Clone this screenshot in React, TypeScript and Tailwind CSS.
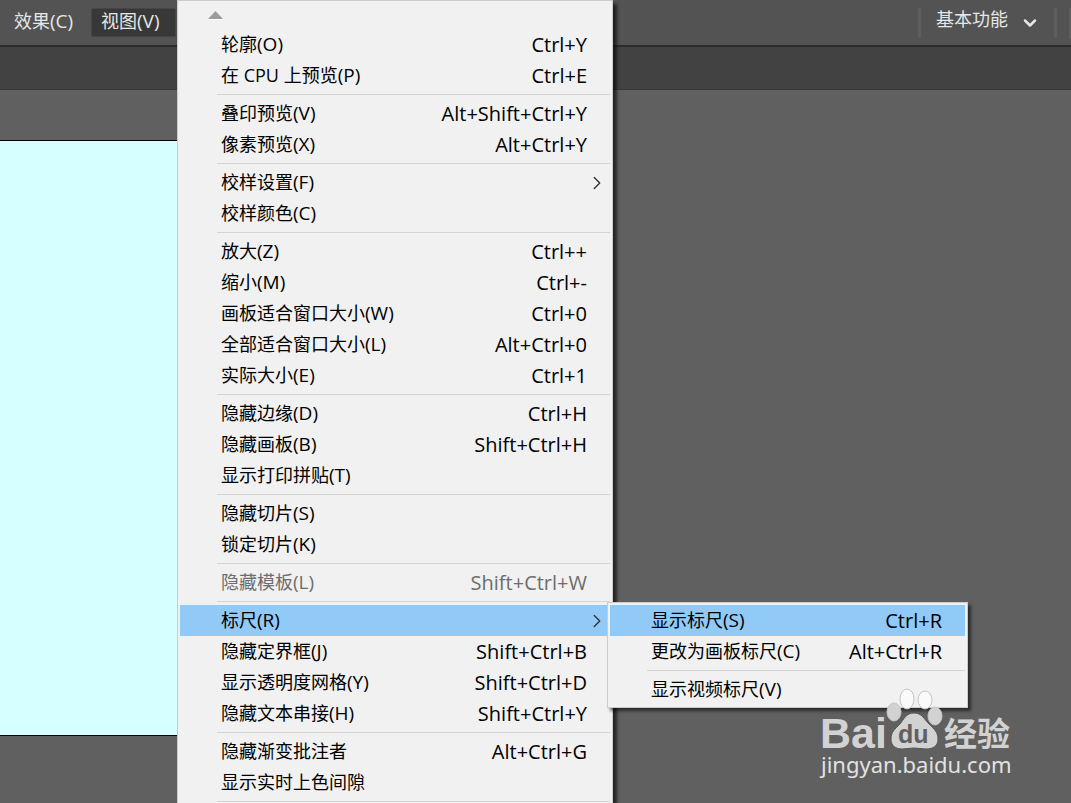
import { ChevronDown, ChevronRight } from "lucide-react";
import clsx from "clsx";

interface MenuEntry {
  label: string;
  hotkey?: string;
  shortcut?: string;
  disabled?: boolean;
  active?: boolean;
  submenu?: MenuEntry[][];
}

const RULER_MENU: MenuEntry[][] = [
  [
    { label: "显示标尺", hotkey: "(S)", shortcut: "Ctrl+R", active: true },
    { label: "更改为画板标尺", hotkey: "(C)", shortcut: "Alt+Ctrl+R" },
  ],
  [{ label: "显示视频标尺", hotkey: "(V)" }],
];

const VIEW_MENU: MenuEntry[][] = [
  [
    { label: "轮廓", hotkey: "(O)", shortcut: "Ctrl+Y" },
    { label: "在 CPU 上预览", hotkey: "(P)", shortcut: "Ctrl+E" },
  ],
  [
    { label: "叠印预览", hotkey: "(V)", shortcut: "Alt+Shift+Ctrl+Y" },
    { label: "像素预览", hotkey: "(X)", shortcut: "Alt+Ctrl+Y" },
  ],
  [
    { label: "校样设置", hotkey: "(F)", submenu: [] },
    { label: "校样颜色", hotkey: "(C)" },
  ],
  [
    { label: "放大", hotkey: "(Z)", shortcut: "Ctrl++" },
    { label: "缩小", hotkey: "(M)", shortcut: "Ctrl+-" },
    { label: "画板适合窗口大小", hotkey: "(W)", shortcut: "Ctrl+0" },
    { label: "全部适合窗口大小", hotkey: "(L)", shortcut: "Alt+Ctrl+0" },
    { label: "实际大小", hotkey: "(E)", shortcut: "Ctrl+1" },
  ],
  [
    { label: "隐藏边缘", hotkey: "(D)", shortcut: "Ctrl+H" },
    { label: "隐藏画板", hotkey: "(B)", shortcut: "Shift+Ctrl+H" },
    { label: "显示打印拼贴", hotkey: "(T)" },
  ],
  [
    { label: "隐藏切片", hotkey: "(S)" },
    { label: "锁定切片", hotkey: "(K)" },
  ],
  [{ label: "隐藏模板", hotkey: "(L)", shortcut: "Shift+Ctrl+W", disabled: true }],
  [
    { label: "标尺", hotkey: "(R)", active: true, submenu: RULER_MENU },
    { label: "隐藏定界框", hotkey: "(J)", shortcut: "Shift+Ctrl+B" },
    { label: "显示透明度网格", hotkey: "(Y)", shortcut: "Shift+Ctrl+D" },
    { label: "隐藏文本串接", hotkey: "(H)", shortcut: "Shift+Ctrl+Y" },
  ],
  [
    { label: "隐藏渐变批注者", shortcut: "Alt+Ctrl+G" },
    { label: "显示实时上色间隙" },
  ],
  [],
];

function MenuItem({ item }: { item: MenuEntry }) {
  return (
    <li role="none" className="relative">
      <button
        role="menuitem"
        disabled={item.disabled}
        aria-haspopup={item.submenu ? "menu" : undefined}
        className={clsx(
          "flex h-[31px] w-full items-center justify-between pl-[41px] whitespace-nowrap",
          item.submenu ? "pr-[2px]" : "pr-[23px]",
          item.active ? "bg-[#91c9f7]" : "enabled:hover:bg-[#91c9f7]",
          item.disabled ? "text-[#6d6d6d]" : "text-black",
        )}
      >
        <span className="text-[18px]">
          {item.label}
          {item.hotkey && <span className="text-[19px]">{item.hotkey}</span>}
        </span>
        {item.shortcut && <span className="text-[20px]">{item.shortcut}</span>}
        {item.submenu && <ChevronRight size={22} strokeWidth={1.5} className="text-[#333]" aria-hidden="true" />}
      </button>
      {item.submenu && item.submenu.length > 0 && (
        <div className="absolute -top-[3px] left-full z-10 -ml-[3px] w-[361px] border border-[#ccc] bg-[#f1f1f1] p-[2px] shadow-[3px_3px_3px_rgba(0,0,0,0.55)]">
          <MenuGroups groups={item.submenu} label="标尺" />
        </div>
      )}
    </li>
  );
}

function MenuGroups({ groups, label }: { groups: MenuEntry[][]; label: string }) {
  return (
    <div role="menu" aria-label={label}>
      {groups.map((group, i) => (
        <div key={i}>
          {i > 0 && <hr className="my-[3px] ml-[37px] border-t border-[#d4d4d4]" />}
          <ul role="none">
            {group.map((item) => (
              <MenuItem key={item.label} item={item} />
            ))}
          </ul>
        </div>
      ))}
    </div>
  );
}

function Watermark() {
  return (
    <svg
      className="pointer-events-none absolute right-[55px] bottom-[19px] z-20"
      width="200"
      height="100"
      viewBox="0 0 200 100"
      fill="#d2d2d2"
      aria-label="Baidu"
    >
      <text x="4" y="64" fontFamily="Liberation Sans" fontWeight="700" fontSize="43">Bai</text>
      <g stroke="#c4c4c4" strokeWidth="1">
        <ellipse cx="78" cy="28" rx="7" ry="9" />
        <ellipse cx="91" cy="15" rx="7" ry="10" fill="#fafafa" />
        <ellipse cx="109" cy="16" rx="7" ry="9" fill="#fafafa" />
        <ellipse cx="119" cy="32" rx="7" ry="9" />
      </g>
      <path
        d="M98 29c-8 0-10 6-14 11-5 5-9 8-9 15 0 7 5 10 11 10 4 0 8-1 12-1s8 1 12 1c7 0 12-3 12-10s-4-10-9-15c-5-5-7-11-15-11z"
        stroke="#565656"
        strokeWidth="1"
      />
      <text x="82" y="59" fill="#606060" fontFamily="Liberation Sans" fontWeight="700" fontSize="25">du</text>
      <text x="128" y="62" fontFamily="Noto Sans CJK SC" fontWeight="700" fontSize="33">经验</text>
      <text x="5" y="89" fill="#e2e2e2" fontFamily="Noto Sans" fontWeight="400" fontSize="22">jingyan.baidu.com</text>
    </svg>
  );
}

export default function App() {
  return (
    <div className="relative flex h-screen flex-col overflow-hidden bg-[#606060] font-['Open_Sans','Noto_Sans_CJK_SC',sans-serif] font-[370]">
      {/* Menu bar */}
      <header className="flex h-[47px] shrink-0 items-start justify-between border-b-2 border-[#2c2c2c] bg-[#535353] text-[18px] text-[#e6e6e6]">
        <nav className="flex gap-[5px] pt-2 pl-1">
          <button className="flex h-[29px] w-[82px] items-start rounded-[2px] border border-transparent pl-[9px] leading-6 whitespace-nowrap">
            效果<span className="text-[19px]">(C)</span>
          </button>
          <button
            aria-expanded="true"
            className="flex h-[29px] w-[85px] items-start rounded-[2px] border border-[#464646] bg-[#383838] pl-[9px] leading-6 whitespace-nowrap"
          >
            视图<span className="text-[19px]">(V)</span>
          </button>
        </nav>
        <div className="mt-2 flex h-[30px] items-stretch">
          <div className="w-[3px] bg-[#5e5e5e]" />
          <button className="flex items-start gap-3 pr-[14px] pl-[15px] leading-[22px]">
            基本功能
            <ChevronDown size={20} strokeWidth={3} className="mt-[5px]" aria-hidden="true" />
          </button>
          <div className="w-[3px] bg-[#5e5e5e]" />
          <div className="ml-3 w-[2px] bg-[#5e5e5e]" />
        </div>
      </header>

      {/* Control bar */}
      <div className="h-[43px] shrink-0 border-b border-[#393939] bg-[#424242]" />

      {/* Canvas */}
      <main className="flex-1 pt-[50px]">
        <div className="h-[596px] w-1/3 border-y border-black bg-[#d6ffff]" />
      </main>

      {/* View menu, scrolled down so it runs past the window edge */}
      <div className="absolute top-0 left-[177px] w-[436px] border border-[#ccc] bg-[#f1f1f1] p-[2px] pb-10 shadow-[4px_4px_3px_rgba(0,0,0,0.6)]">
        <button aria-label="向上滚动" className="flex h-[26px] w-full items-start pt-2 pl-7">
          <svg width="15" height="9" viewBox="0 0 15 9" aria-hidden="true">
            <path d="M0 8 7.500 0 15 8z" fill="#9c9c9c" />
            <path d="M0 8h15v1H0z" fill="#fff" />
          </svg>
        </button>
        <MenuGroups groups={VIEW_MENU} label="视图" />
      </div>

      <Watermark />
    </div>
  );
}
